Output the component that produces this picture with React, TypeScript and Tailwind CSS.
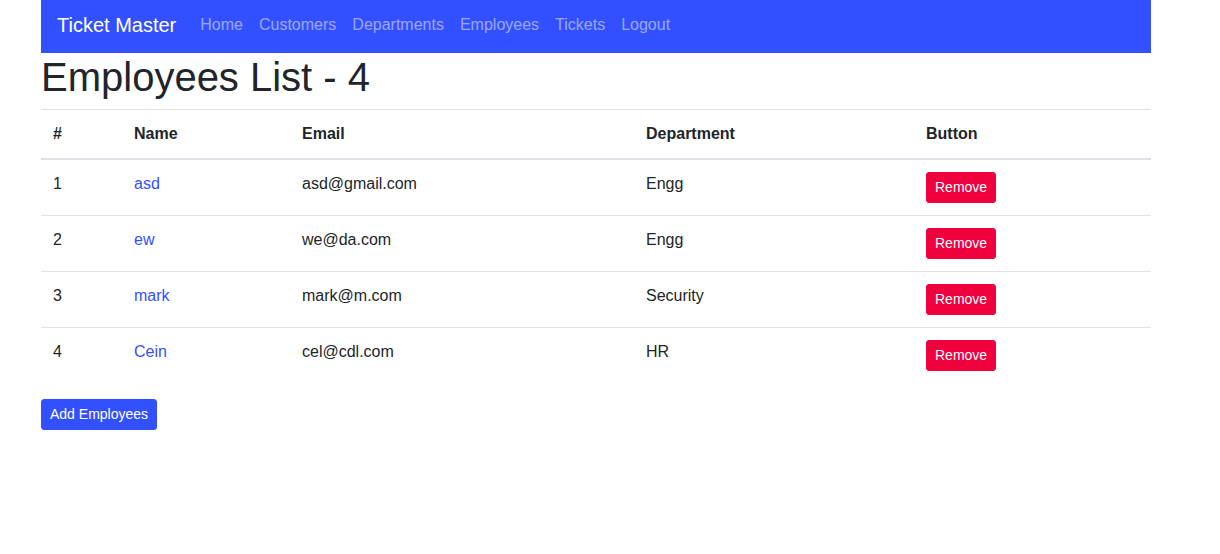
const employees = [
  { id: 1, name: 'asd', email: 'asd@gmail.com', department: 'Engg' },
  { id: 2, name: 'ew', email: 'we@da.com', department: 'Engg' },
  { id: 3, name: 'mark', email: 'mark@m.com', department: 'Security' },
  { id: 4, name: 'Cein', email: 'cel@cdl.com', department: 'HR' },
];

const links = ['Home', 'Customers', 'Departments', 'Employees', 'Tickets', 'Logout'];

export default function App() {
  return (
    <div className="min-h-[554px] bg-white text-[#212529] font-['Liberation_Sans',Arial,sans-serif] text-base">
      <div className="ml-[41px] w-[1110px]">
        <nav className="flex h-[53px] items-center bg-[#3350ff] px-4 pb-1">
          <a href="#" className="mr-4 text-[20px] leading-[30px] text-white">Ticket Master</a>
          <div className="flex">
            {links.map((l) => (
              <a key={l} href="#" className="px-2 leading-6 text-white/50">
                {l}
              </a>
            ))}
          </div>
        </nav>

        <h1 className="mb-2 text-[40px] leading-[48px] font-normal">Employees List - 4</h1>

        <table className="mb-4 w-full border-collapse table-fixed">
          <colgroup>
            <col className="w-[81px]" />
            <col className="w-[168px]" />
            <col className="w-[344px]" />
            <col className="w-[280px]" />
            <col />
          </colgroup>
          <thead>
            <tr>
              {['#', 'Name', 'Email', 'Department', 'Button'].map((h) => (
                <th
                  key={h}
                  className="border-t border-b-2 border-t-[#dee2e6] border-b-[#dee2e6] p-3 text-left align-bottom font-bold leading-6"
                >
                  {h}
                </th>
              ))}
            </tr>
          </thead>
          <tbody>
            {employees.map((e) => (
              <tr key={e.id}>
                <td className="border-t border-[#dee2e6] p-3 align-top leading-6">{e.id}</td>
                <td className="border-t border-[#dee2e6] p-3 align-top leading-6">
                  <a href="#" className="text-[#3350ff]">{e.name}</a>
                </td>
                <td className="border-t border-[#dee2e6] p-3 align-top leading-6">{e.email}</td>
                <td className="border-t border-[#dee2e6] p-3 align-top leading-6">{e.department}</td>
                <td className="border-t border-[#dee2e6] p-3 align-top leading-6">
                  <button className="rounded-[3px] border border-[#f0003c] bg-[#f0003c] px-2 py-1 text-sm leading-[21px] text-white">
                    Remove
                  </button>
                </td>
              </tr>
            ))}
          </tbody>
        </table>

        <button className="rounded-[3px] border border-[#3350ff] bg-[#3350ff] px-2 py-1 text-sm leading-[21px] text-white">
          Add Employees
        </button>
      </div>
    </div>
  );
}
